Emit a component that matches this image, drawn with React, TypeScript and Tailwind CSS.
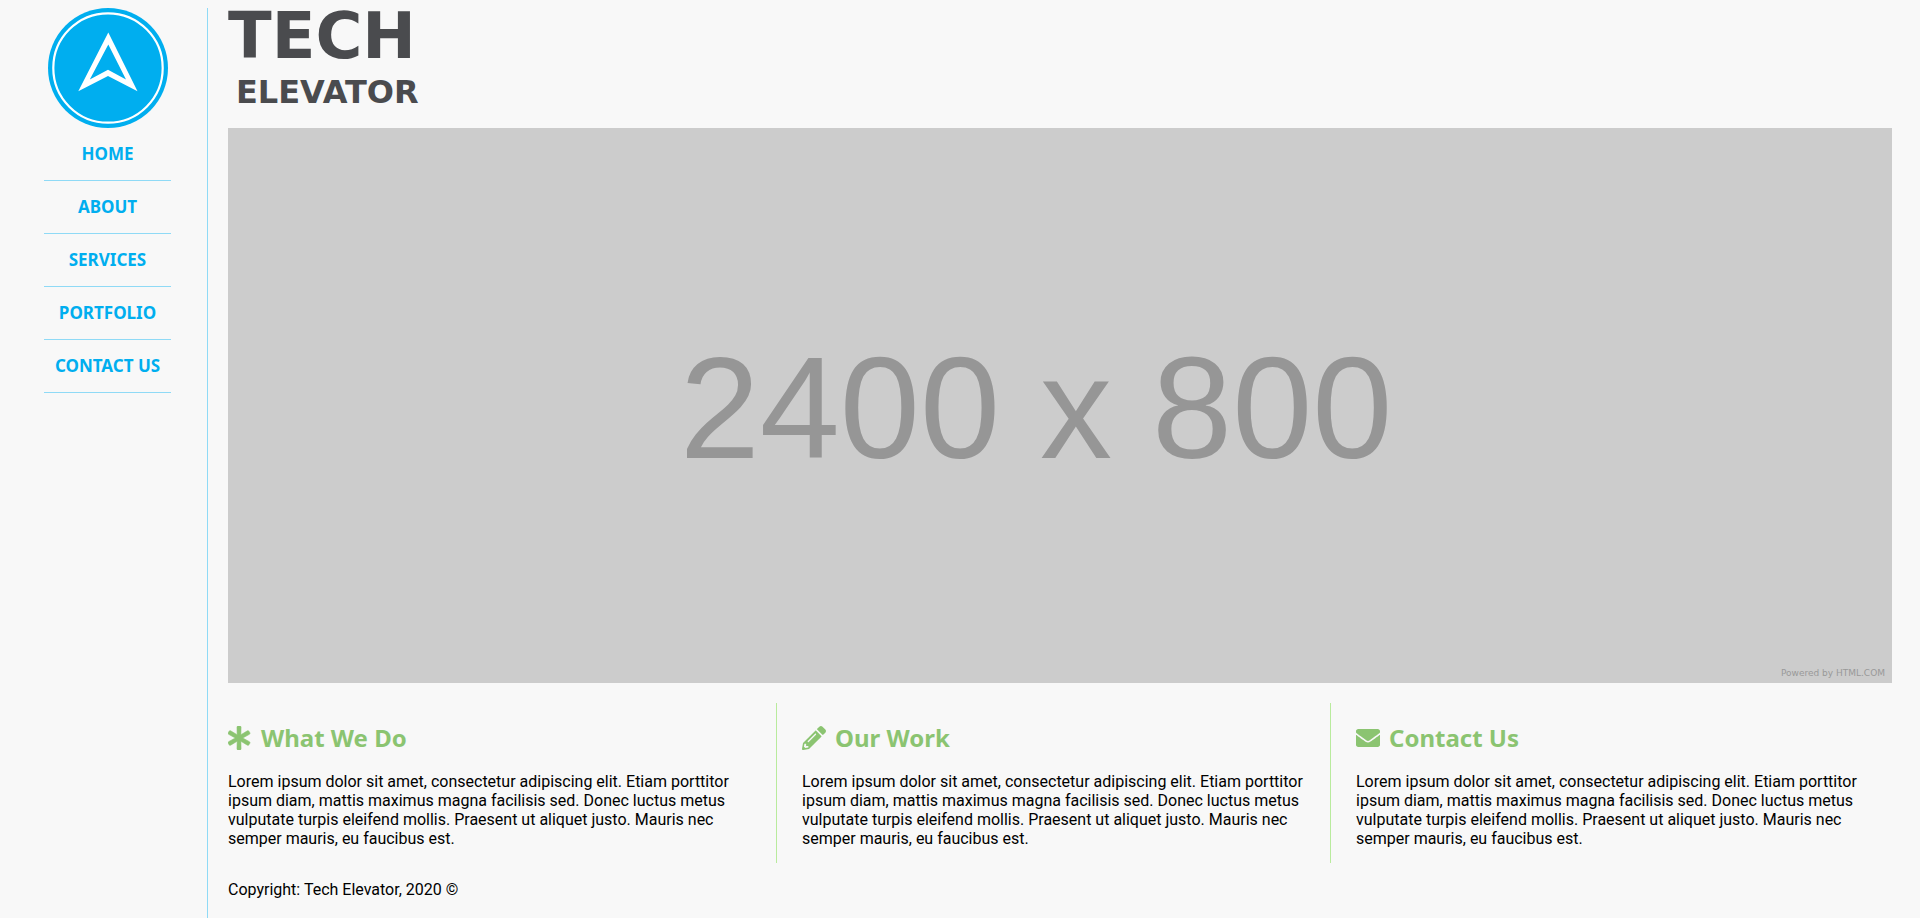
import { FaEnvelope, FaPencilAlt } from "react-icons/fa";

const navItems = ["Home", "About", "Services", "Portfolio", "Contact Us"];

const blurb =
  "Lorem ipsum dolor sit amet, consectetur adipiscing elit. Etiam porttitor ipsum diam, mattis maximus magna facilisis sed. Donec luctus metus vulputate turpis eleifend mollis. Praesent ut aliquet justo. Mauris nec semper mauris, eu faucibus est.";

function Asterisk({ className }: { className?: string }) {
  return (
    <svg viewBox="21 0 512 512" className={className} fill="currentColor" stroke="currentColor" strokeWidth="12" aria-hidden="true">
      <path d="M478.21 334.093L336 256l142.21-78.093c11.795-6.477 15.961-21.384 9.232-33.037l-19.48-33.741c-6.728-11.653-21.72-15.499-33.227-8.523L296 186.718l3.475-162.204C299.763 11.061 288.937 0 275.48 0h-38.96c-13.456 0-24.283 11.061-23.994 24.514L216 186.718 77.265 102.607c-11.506-6.976-26.499-3.13-33.227 8.523l-19.48 33.741c-6.728 11.653-2.562 26.56 9.233 33.037L176 256 33.79 334.093c-11.795 6.477-15.961 21.384-9.232 33.037l19.48 33.741c6.728 11.653 21.721 15.499 33.227 8.523L216 325.282l-3.475 162.204C212.237 500.939 223.064 512 236.52 512h38.961c13.456 0 24.283-11.061 23.995-24.514L296 325.282l138.735 84.111c11.506 6.976 26.499 3.13 33.227-8.523l19.48-33.741c6.728-11.653 2.563-26.559-9.232-33.036z" />
    </svg>
  );
}

const sections = [
  { title: "What We Do", Icon: Asterisk, box: "pr-5 border-r" },
  { title: "Our Work", Icon: FaPencilAlt, box: "px-[25px] border-r" },
  { title: "Contact Us", Icon: FaEnvelope, box: "pl-[25px] pr-8" },
];

function Badge() {
  return (
    <svg viewBox="0 0 120 120" className="size-[120px]" role="img" aria-label="Tech Elevator">
      <circle cx="60" cy="60" r="60" fill="#00aeef" />
      <circle cx="60" cy="60" r="54.7" fill="none" stroke="#fff" strokeWidth="2.2" />
      <path
        fill="#fff"
        fillRule="evenodd"
        d="M60.3 24.5 L89.5 83.3 L60 68 L30.3 83.3 Z M60.3 36.5 L41.8 71.5 L60 61.8 L78 71.5 Z"
      />
    </svg>
  );
}

export default function App() {
  return (
    <div className="flex min-h-screen bg-[#f8f8f8] font-[Roboto,sans-serif] text-base leading-[19px] text-black">
      <aside className="mt-2 flex w-52 shrink-0 flex-col items-center border-r border-[#8fdaf6] pl-2">
        <Badge />
        <nav className="w-[127px]">
          <ul>
            {navItems.map((item) => (
              <li key={item} className="border-b border-[#8fdaf6] text-center">
                <a
                  href="#"
                  className="block pt-4 pb-[17px] font-['Noto_Sans',sans-serif] text-[17px] leading-[19px] font-bold text-[#00aeef] uppercase"
                >
                  {item}
                </a>
              </li>
            ))}
          </ul>
        </nav>
      </aside>

      <div className="min-w-0 flex-1 pr-7 pl-5">
        <header className="h-32 pt-2 font-['DejaVu_Sans',sans-serif] font-bold text-[#4a4b4e]">
          <h1>
            <span className="block text-[64px] leading-[56px]">TECH</span>
            <span className="block pl-2 text-[32px] leading-[56px]">ELEVATOR</span>
          </h1>
        </header>

        <main>
          <div className="relative flex aspect-[3/1] items-center justify-center bg-[#cccccc] pt-2 pr-12 font-['Liberation_Sans',Arial,sans-serif] text-[144px] leading-none text-[#969696]">
            2400 x 800
            <span className="absolute right-[7px] bottom-1 font-['DejaVu_Sans',sans-serif] text-[9px] leading-3 text-[#999999]">
              Powered by HTML.COM
            </span>
          </div>

          <div className="mt-5 grid grid-cols-[549fr_554fr_561fr]">
            {sections.map(({ title, Icon, box }) => (
              <section key={title} className={`h-40 border-[#b9eb9d] pt-5 ${box}`}>
                <h2 className="flex items-center gap-[9px] font-['Noto_Sans',sans-serif] text-2xl leading-[30px] font-bold text-[#8bc471]">
                  <Icon className="size-6" aria-hidden="true" />
                  {title}
                </h2>
                <p className="mt-[19px]">{blurb}</p>
              </section>
            ))}
          </div>
        </main>

        <footer className="pt-[17px] pb-5">Copyright: Tech Elevator, 2020 ©</footer>
      </div>
    </div>
  );
}
